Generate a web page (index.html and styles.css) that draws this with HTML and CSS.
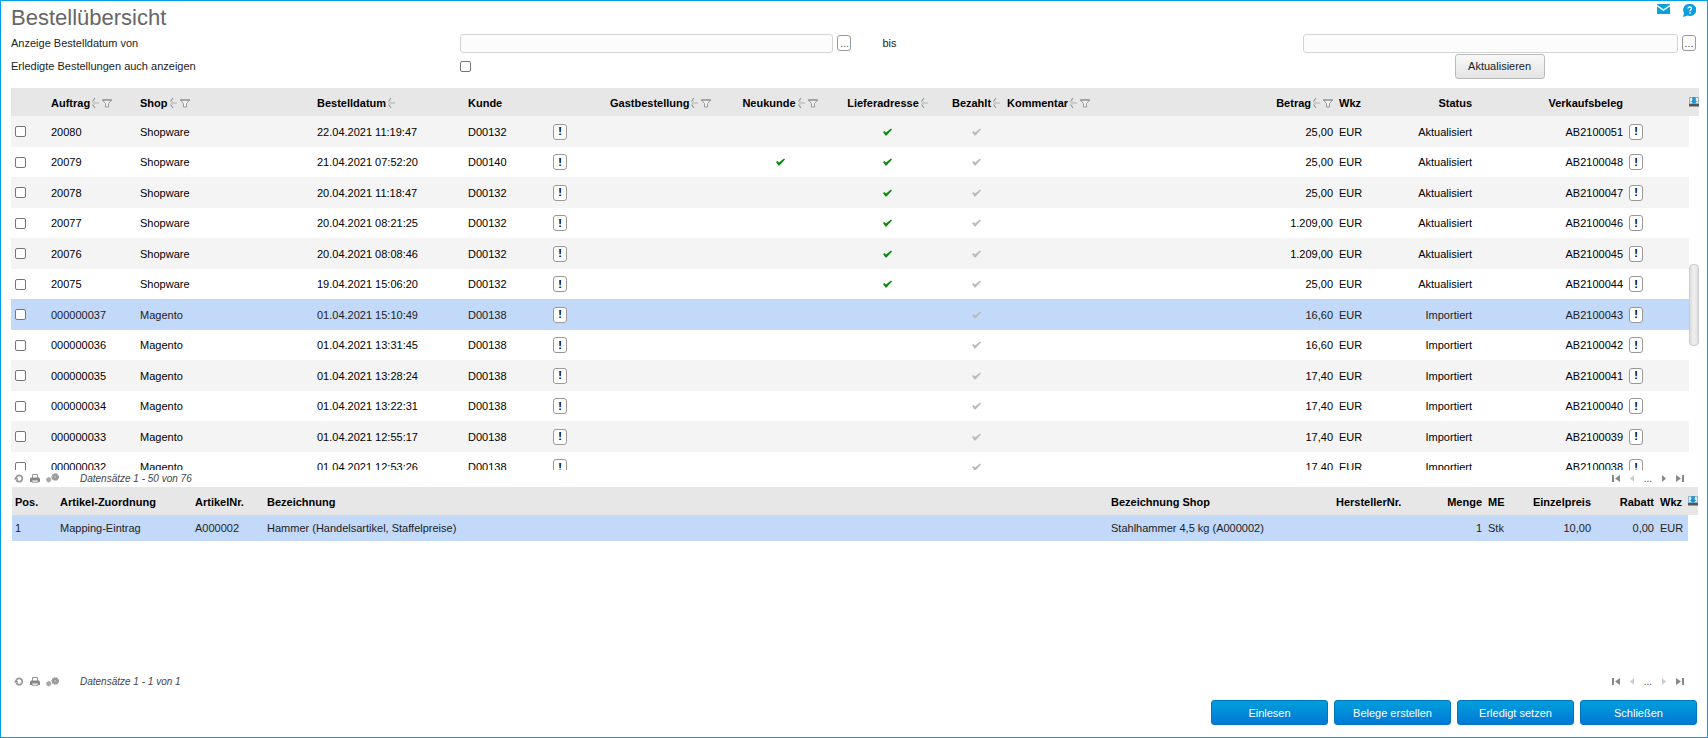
FILE: index.html
```html
<!DOCTYPE html>
<html lang="de">
<head>
  <meta charset="UTF-8" />
  <title>Bestellübersicht</title>
  <meta name="viewport" content="width=device-width, initial-scale=1.0" />
  <link rel="stylesheet" href="styles.css">
</head>
<body>
<svg class="sprite" aria-hidden="true">
  <symbol id="sort" viewBox="0 0 8 12">
    <path d="M4 1 1.500 4.500M1.500 7.500 4 11" fill="none" stroke="#999" stroke-width="1.200" />
    <path d="M1 6 4 3.500V5h4v2H4v1.500z" fill="#ccc" />
  </symbol>
  <symbol id="filter" viewBox="0 0 10 9">
    <path d="M.5 1h9L6.500 4.500V8h-3V4.500Z" fill="#f4f4f4" stroke="#999" />
    <path d="M0 1h10" stroke="#888" />
  </symbol>
  <symbol id="check" viewBox="0 0 9 8">
    <path d="M0 4l1.500-1L3 4.500 8 .5l1 1L3.500 7.500h-1z" fill="currentColor" />
  </symbol>
  <symbol id="config" viewBox="0 0 10 10">
    <path d="M0 0h10v8H0z" fill="#8fb4c8" />
    <path d="M1 1h2v5H1zM7 1h2v5H7z" fill="#e3eef4" />
    <path d="M3.500 0h3v4h2L5 7 1.500 4h2z" fill="#1a96d4" />
    <path d="M0 7h10v2.500H0z" fill="#555" />
  </symbol>
  <symbol id="reload" viewBox="0 0 10 9">
    <path d="M2.300 3A3.200 3.200 0 1 1 2.300 6" fill="none" stroke="#999" stroke-width="1.800" />
    <path d="M0 5.500l2-3 2.500 3z" fill="#888" />
  </symbol>
  <symbol id="print" viewBox="0 0 10 9">
    <path d="M2.500 4V.5h5V4" fill="#fff" stroke="#999" />
    <path d="M1 3.500h8l1 1V8H0V4.500z" fill="#888" />
    <path d="M2 6h6v2.500H2z" fill="#ddd" stroke="#888" stroke-width=".6" />
  </symbol>
  <symbol id="gears" viewBox="0 0 13 10">
    <circle cx="2.700" cy="6.700" r="2.200" fill="#aaa" stroke="#999" stroke-dasharray="1 .4" />
    <circle cx="9.200" cy="4" r="3" fill="#999" stroke="#999" stroke-width="1.600" stroke-dasharray="1.600 .5" />
    <circle cx="9.200" cy="4" r="1" fill="#bbb" />
  </symbol>
  <symbol id="first" viewBox="0 0 9 7"><path d="M0 0h2v7H0zM8 0v7L3 3.500z" fill="currentColor" /></symbol>
  <symbol id="prev" viewBox="0 0 9 7"><path d="M6 0v7L2 3.500z" fill="currentColor" /></symbol>
  <symbol id="next" viewBox="0 0 9 7"><path d="M3 0v7L7 3.500z" fill="currentColor" /></symbol>
  <symbol id="last" viewBox="0 0 9 7"><path d="M7 0h2v7H7zM1 0v7l5-3.500z" fill="currentColor" /></symbol>
</svg>

<header class="page-head">
  <h1>Bestellübersicht</h1>
  <div class="head-links">
    <a href="#" aria-label="E-Mail">
      <svg width="13" height="10" viewBox="0 0 13 10"><path d="M0 0h13v10H0z" fill="#0a9fdf" /><path d="M0 1.500 6.500 6 13 1.500" fill="none" stroke="#fff" stroke-width="1.500" /></svg>
    </a>
    <a href="#" aria-label="Hilfe">
      <svg width="14" height="13" viewBox="0 0 14 13"><path d="M8 0a6 6 0 1 1-2 11.500L1 13l1-4A6 6 0 0 1 8 0z" fill="#0a9fdf" /><path d="M6 4.500C6 2.500 9.500 2.500 9.500 4.500 9.500 6 8 5.500 8 7.200M8 8.200v1.500" fill="none" stroke="#fff" stroke-width="1.300" /></svg>
    </a>
  </div>
</header>

<form class="search">
  <label for="dateFrom">Anzeige Bestelldatum von</label>
  <div class="field">
    <input type="text" id="dateFrom" />
    <button type="button" class="pick" aria-label="Datum von wählen">...</button>
  </div>
  <label for="dateTo">bis</label>
  <div class="field">
    <input type="text" id="dateTo" />
    <button type="button" class="pick" aria-label="Datum bis wählen">...</button>
  </div>
  <label for="showDone">Erledigte Bestellungen auch anzeigen</label>
  <div class="done"><input type="checkbox" id="showDone" /></div>
  <div class="refresh"><button type="button" class="btn-light">Aktualisieren</button></div>
</form>

<section class="list orders">
  <table>
    <colgroup>
      <col class="w-sel"><col class="w-order"><col class="w-shop"><col class="w-date"><col class="w-customer">
      <col class="w-info"><col class="w-guest"><col class="w-new"><col class="w-address"><col class="w-paid">
      <col><col class="w-amount"><col class="w-currency"><col class="w-status"><col class="w-receipt">
      <col class="w-open"><col class="w-scroll">
    </colgroup>
    <thead>
      <tr>
        <th></th>
        <th>Auftrag<svg class="sort"><use href="#sort" /></svg><svg class="filter"><use href="#filter" /></svg></th>
        <th>Shop<svg class="sort"><use href="#sort" /></svg><svg class="filter"><use href="#filter" /></svg></th>
        <th>Bestelldatum<svg class="sort"><use href="#sort" /></svg></th>
        <th>Kunde</th>
        <th></th>
        <th>Gastbestellung<svg class="sort"><use href="#sort" /></svg><svg class="filter"><use href="#filter" /></svg></th>
        <th class="center">Neukunde<svg class="sort"><use href="#sort" /></svg><svg class="filter"><use href="#filter" /></svg></th>
        <th class="center">Lieferadresse<svg class="sort"><use href="#sort" /></svg></th>
        <th class="center">Bezahlt<svg class="sort"><use href="#sort" /></svg></th>
        <th>Kommentar<svg class="sort"><use href="#sort" /></svg><svg class="filter"><use href="#filter" /></svg></th>
        <th class="right">Betrag<svg class="sort"><use href="#sort" /></svg><svg class="filter"><use href="#filter" /></svg></th>
        <th>Wkz</th>
        <th class="right">Status</th>
        <th class="right">Verkaufsbeleg</th>
        <th></th>
        <th class="config"><svg width="10" height="10"><use href="#config" /></svg></th>
      </tr>
    </thead>
    <tbody id="orderRows"></tbody>
  </table>
  <div class="thumb"></div>
</section>

<div class="pager">
  <button type="button" aria-label="Neu laden"><svg width="10" height="9"><use href="#reload" /></svg></button>
  <button type="button" aria-label="Drucken"><svg width="10" height="9"><use href="#print" /></svg></button>
  <button type="button" aria-label="Einstellungen"><svg width="13" height="10"><use href="#gears" /></svg></button>
  <em>Datensätze 1 - 50 von 76</em>
  <nav>
    <button type="button" aria-label="Erste Seite"><svg width="9" height="7"><use href="#first" /></svg></button>
    <button type="button" class="off" aria-label="Zurück"><svg width="9" height="7"><use href="#prev" /></svg></button>
    <span>...</span>
    <button type="button" aria-label="Weiter"><svg width="9" height="7"><use href="#next" /></svg></button>
    <button type="button" aria-label="Letzte Seite"><svg width="9" height="7"><use href="#last" /></svg></button>
  </nav>
</div>

<section class="list items">
  <table>
    <colgroup>
      <col class="w-pos"><col class="w-mapping"><col class="w-article"><col><col class="w-shopname">
      <col class="w-maker"><col class="w-qty"><col class="w-unit"><col class="w-price"><col class="w-discount">
      <col class="w-cur"><col class="w-scroll">
    </colgroup>
    <thead>
      <tr>
        <th>Pos.</th>
        <th>Artikel-Zuordnung</th>
        <th>ArtikelNr.</th>
        <th>Bezeichnung</th>
        <th>Bezeichnung Shop</th>
        <th>HerstellerNr.</th>
        <th class="right">Menge</th>
        <th>ME</th>
        <th class="right">Einzelpreis</th>
        <th class="right">Rabatt</th>
        <th>Wkz</th>
        <th class="config"><svg width="10" height="10"><use href="#config" /></svg></th>
      </tr>
    </thead>
    <tbody>
      <tr class="selected">
        <td>1</td>
        <td>Mapping-Eintrag</td>
        <td>A000002</td>
        <td>Hammer (Handelsartikel, Staffelpreise)</td>
        <td>Stahlhammer 4,5 kg (A000002)</td>
        <td></td>
        <td class="right">1</td>
        <td>Stk</td>
        <td class="right">10,00</td>
        <td class="right">0,00</td>
        <td>EUR</td>
        <td class="gutter"></td>
      </tr>
    </tbody>
  </table>
</section>

<div class="pager">
  <button type="button" aria-label="Neu laden"><svg width="10" height="9"><use href="#reload" /></svg></button>
  <button type="button" aria-label="Drucken"><svg width="10" height="9"><use href="#print" /></svg></button>
  <button type="button" aria-label="Einstellungen"><svg width="13" height="10"><use href="#gears" /></svg></button>
  <em>Datensätze 1 - 1 von 1</em>
  <nav>
    <button type="button" aria-label="Erste Seite"><svg width="9" height="7"><use href="#first" /></svg></button>
    <button type="button" class="off" aria-label="Zurück"><svg width="9" height="7"><use href="#prev" /></svg></button>
    <span>...</span>
    <button type="button" class="off" aria-label="Weiter"><svg width="9" height="7"><use href="#next" /></svg></button>
    <button type="button" aria-label="Letzte Seite"><svg width="9" height="7"><use href="#last" /></svg></button>
  </nav>
</div>

<footer class="actions">
  <button type="button">Einlesen</button>
  <button type="button">Belege erstellen</button>
  <button type="button">Erledigt setzen</button>
  <button type="button">Schließen</button>
</footer>

<script src="script.js"></script>
</body>
</html>
```
FILE: styles.css
```css
* {
  box-sizing: border-box;
}
body {
  display: flex;
  flex-direction: column;
  height: 100vh;
  margin: 0;
  padding: 0 8px 12px 10px;
  border: 1px solid #009ee3;
  background: #fff;
  color: #000;
  font-family: Arial, "Liberation Sans", sans-serif;
  font-size: 11px;
}
button, input {
  font: inherit;
  margin: 0;
}
.sprite {
  display: none;
}
.page-head {
  display: flex;
  justify-content: space-between;
  height: 32px;
}
h1 {
  margin: 0;
  padding-top: 3px;
  color: #666;
  font-size: 22px;
  font-weight: normal;
  line-height: 28px;
}
.head-links {
  display: flex;
  gap: 12px;
  padding: 3px 3px 0 0;
}
.head-links svg {
  display: block;
}

/* search form */
.search {
  display: grid;
  grid-template-columns: 449fr 423fr 421fr 393fr;
  grid-template-rows: 20px 26px;
  align-items: center;
  margin-bottom: 9px;
  padding-right: 3px;
  color: #222;
}
.field {
  display: flex;
  align-items: center;
  gap: 4px;
}
.search .field:first-of-type {
  margin-right: 31px;
}
.field input {
  flex: 1;
  height: 19px;
  border: 1px solid #d4d4d4;
  border-radius: 3px;
  background: #fcfcfc;
}
.pick {
  width: 14px;
  height: 16px;
  padding: 0;
  border: 1px solid #999;
  border-radius: 3px;
  background: #fff;
  color: #555;
  line-height: 12px;
}
input[type="checkbox"] {
  appearance: none;
  display: block;
  width: 11px;
  height: 11px;
  border: 1px solid #767676;
  border-radius: 2px;
  background: #fff;
}
input[type="checkbox"]:checked {
  background: #009ee3;
}
.refresh {
  grid-column: 4;
  text-align: center;
}
.btn-light {
  width: 90px;
  height: 25px;
  border: 1px solid #bbb;
  border-radius: 3px;
  background: linear-gradient(#f8f8f8, #e4e4e4);
  color: #222;
}

/* lists */
.list {
  position: relative;
  min-height: 0;
  overflow: hidden;
}
.orders {
  flex: 381 1 0;
}
.items {
  flex: 186 1 0;
  margin: 0 1px;
}
table {
  width: 100%;
  border-collapse: collapse;
  table-layout: fixed;
}
th, td {
  padding: 0 3px;
  text-align: left;
  white-space: nowrap;
}
th {
  height: 28px;
  padding-top: 2px;
  background: #e7e7e7;
}
td {
  height: 30px;
}
.orders tbody tr:nth-child(odd) td {
  height: 31px;
  background: #f4f4f4;
}
.items td {
  height: 26px;
}
.list tbody tr.selected td {
  background: #c3d9f9;
  color: #222;
}
.list tbody tr td.gutter:last-child {
  background: #fff;
}
.center {
  text-align: center;
}
.right {
  text-align: right;
}
.config {
  padding: 0;
}
.config svg {
  display: block;
}
.sort {
  width: 8px;
  height: 12px;
  margin-left: 1px;
  vertical-align: -2px;
}
.filter {
  width: 10px;
  height: 9px;
  margin-left: 3px;
  vertical-align: -1px;
}
.check {
  width: 9px;
  height: 8px;
  color: #bbb;
}
.check.yes {
  color: #0a8a0a;
}
td input[type="checkbox"] {
  margin-left: 1px;
}
.info {
  display: block;
  width: 14px;
  height: 16px;
  padding: 0;
  border: 1px solid #999;
  border-radius: 3px;
  background: #fff;
  font-weight: bold;
  line-height: 13px;
}
.thumb {
  position: absolute;
  top: 176px;
  right: 0;
  width: 10px;
  height: 82px;
  border: 1px solid #ccc;
  border-radius: 4px;
  background: linear-gradient(to right, #ddd, #f0f0f0, #ddd);
}

.w-sel { width: 37px; }
.w-order { width: 89px; }
.w-shop { width: 177px; }
.w-date { width: 151px; }
.w-customer { width: 85px; }
.w-info { width: 57px; }
.w-guest { width: 126px; }
.w-new { width: 94px; }
.w-address { width: 121px; }
.w-paid { width: 56px; }
.w-amount { width: 86px; }
.w-currency { width: 44px; }
.w-status { width: 95px; }
.w-receipt { width: 151px; }
.w-open { width: 63px; }
.w-scroll { width: 10px; }

.w-pos { width: 45px; }
.w-mapping { width: 135px; }
.w-article { width: 72px; }
.w-shopname { width: 225px; }
.w-maker { width: 97px; }
.w-qty { width: 55px; }
.w-unit { width: 34px; }
.w-price { width: 75px; }
.w-discount { width: 63px; }
.w-cur { width: 31px; }

/* record pager */
.pager {
  display: flex;
  align-items: center;
  gap: 6px;
  height: 17px;
  padding: 0 15px 0 3px;
  color: #444;
  font-size: 10px;
}
.pager button {
  padding: 0;
  border: 0;
  background: none;
  color: #888;
}
.pager button.off {
  color: #ccc;
}
.pager svg {
  display: block;
}
.pager em {
  margin-left: 15px;
}
.pager nav {
  display: flex;
  align-items: center;
  gap: 7px;
  margin-left: auto;
}

.actions {
  display: flex;
  justify-content: flex-end;
  gap: 6px;
  margin-top: 10px;
  padding-right: 2px;
}
.actions button {
  width: 117px;
  height: 25px;
  border: 1px solid #0076bd;
  border-radius: 3px;
  background: linear-gradient(#009fdb, #0078d7);
  color: #fff;
}
```
FILE: script.js
```javascript
// [order, shop, date, customer, new customer, delivery address, amount, status, receipt]
const orders = [
  ["20080", "Shopware", "22.04.2021 11:19:47", "D00132", false, true, "25,00", "Aktualisiert", "AB2100051"],
  ["20079", "Shopware", "21.04.2021 07:52:20", "D00140", true, true, "25,00", "Aktualisiert", "AB2100048"],
  ["20078", "Shopware", "20.04.2021 11:18:47", "D00132", false, true, "25,00", "Aktualisiert", "AB2100047"],
  ["20077", "Shopware", "20.04.2021 08:21:25", "D00132", false, true, "1.209,00", "Aktualisiert", "AB2100046"],
  ["20076", "Shopware", "20.04.2021 08:08:46", "D00132", false, true, "1.209,00", "Aktualisiert", "AB2100045"],
  ["20075", "Shopware", "19.04.2021 15:06:20", "D00132", false, true, "25,00", "Aktualisiert", "AB2100044"],
  ["000000037", "Magento", "01.04.2021 15:10:49", "D00138", false, false, "16,60", "Importiert", "AB2100043"],
  ["000000036", "Magento", "01.04.2021 13:31:45", "D00138", false, false, "16,60", "Importiert", "AB2100042"],
  ["000000035", "Magento", "01.04.2021 13:28:24", "D00138", false, false, "17,40", "Importiert", "AB2100041"],
  ["000000034", "Magento", "01.04.2021 13:22:31", "D00138", false, false, "17,40", "Importiert", "AB2100040"],
  ["000000033", "Magento", "01.04.2021 12:55:17", "D00138", false, false, "17,40", "Importiert", "AB2100039"],
  ["000000032", "Magento", "01.04.2021 12:53:26", "D00138", false, false, "17,40", "Importiert", "AB2100038"]
];
const selectedOrder = "000000037";

const yes = '<svg class="check yes"><use href="#check" /></svg>';
const paid = '<svg class="check"><use href="#check" /></svg>';

document.getElementById("orderRows").innerHTML = orders.map(
  ([order, shop, date, customer, isNew, address, amount, status, receipt]) => `
  <tr class="${order === selectedOrder ? "selected" : ""}">
    <td><input type="checkbox" aria-label="Auftrag ${order}" /></td>
    <td>${order}</td>
    <td>${shop}</td>
    <td>${date}</td>
    <td>${customer}</td>
    <td><button type="button" class="info" aria-label="Kunde ${customer}">!</button></td>
    <td></td>
    <td class="center">${isNew ? yes : ""}</td>
    <td class="center">${address ? yes : ""}</td>
    <td class="center">${paid}</td>
    <td></td>
    <td class="right">${amount}</td>
    <td>EUR</td>
    <td class="right">${status}</td>
    <td class="right">${receipt}</td>
    <td><button type="button" class="info" aria-label="Beleg ${receipt}">!</button></td>
    <td class="gutter"></td>
  </tr>`
).join("");
```
